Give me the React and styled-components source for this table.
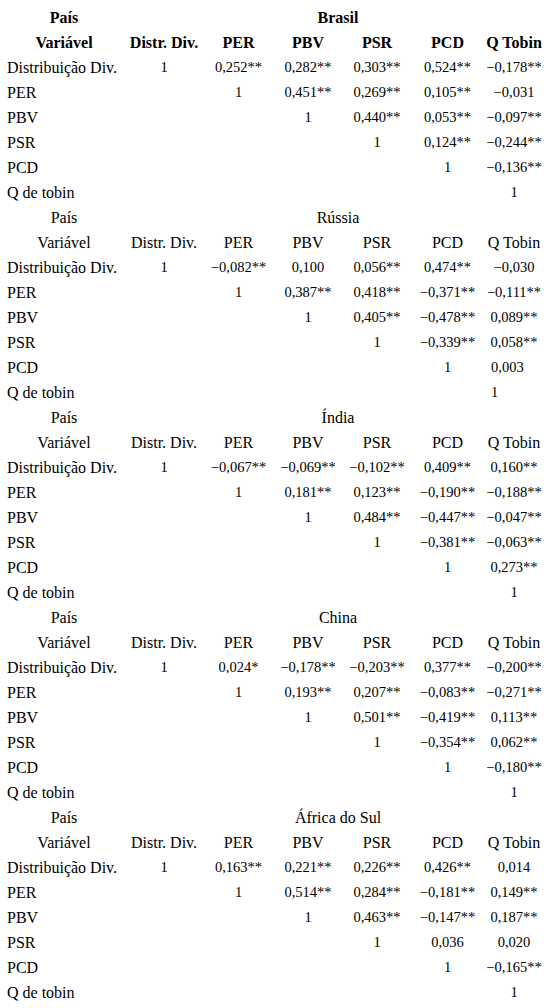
import React from "react";
import styled, { createGlobalStyle } from "styled-components";

const GlobalStyle = createGlobalStyle`
    html, body {
        margin: 0;
        padding: 0;
        background: #ffffff;
    }
    body {
        font-family: "Liberation Serif", "Times New Roman", serif;
        color: #000000;
    }
`;

const Page = styled.div`
    width: 558px;
    padding-top: 5px;
`;

const Section = styled.div`
    display: grid;
    grid-template-columns: 128px 72px 77px 62px 76px 65px 68px;
    grid-auto-rows: 25px;
    font-size: 16px;
    line-height: 25px;
`;

const Cell = styled.div`
    white-space: nowrap;
    text-align: center;
    font-weight: ${(p) => (p.$bold ? "bold" : "normal")};
`;

const ValueCell = styled.div`
    white-space: nowrap;
    font-size: 14.5px;
    text-align: ${(p) => (p.$left ? "left" : "center")};
    padding-left: ${(p) => (p.$left ? "11px" : "0")};
`;

const CountryCell = styled(Cell)`
    grid-column: 2 / span 6;
`;

const LabelCell = styled.div`
    white-space: nowrap;
    padding-left: 7px;
`;

const columns = ["Distr. Div.", "PER", "PBV", "PSR", "PCD", "Q Tobin"];
const labels = ["Distribuição Div.", "PER", "PBV", "PSR", "PCD", "Q de tobin"];

// valores acima da diagonal, linha por linha (a diagonal é sempre 1)
const countries = [
    {
        name: "Brasil",
        bold: true,
        rows: [
            ["0,252**", "0,282**", "0,303**", "0,524**", "−0,178**"],
            ["0,451**", "0,269**", "0,105**", "−0,031"],
            ["0,440**", "0,053**", "−0,097**"],
            ["0,124**", "−0,244**"],
            ["−0,136**"],
            [],
        ],
    },
    {
        name: "Rússia",
        rows: [
            ["−0,082**", "0,100", "0,056**", "0,474**", "−0,030"],
            ["0,387**", "0,418**", "−0,371**", "−0,111**"],
            ["0,405**", "−0,478**", "0,089**"],
            ["−0,339**", "0,058**"],
            ["0,003"],
            [],
        ],
        leftLast: true,
    },
    {
        name: "Índia",
        rows: [
            ["−0,067**", "−0,069**", "−0,102**", "0,409**", "0,160**"],
            ["0,181**", "0,123**", "−0,190**", "−0,188**"],
            ["0,484**", "−0,447**", "−0,047**"],
            ["−0,381**", "−0,063**"],
            ["0,273**"],
            [],
        ],
    },
    {
        name: "China",
        rows: [
            ["0,024*", "−0,178**", "−0,203**", "0,377**", "−0,200**"],
            ["0,193**", "0,207**", "−0,083**", "−0,271**"],
            ["0,501**", "−0,419**", "0,113**"],
            ["−0,354**", "0,062**"],
            ["−0,180**"],
            [],
        ],
    },
    {
        name: "África do Sul",
        rows: [
            ["0,163**", "0,221**", "0,226**", "0,426**", "0,014"],
            ["0,514**", "0,284**", "−0,181**", "0,149**"],
            ["0,463**", "−0,147**", "0,187**"],
            ["0,036", "0,020"],
            ["−0,165**"],
            [],
        ],
    },
];

function CountryTable({ country }) {
    const { name, bold, rows, leftLast } = country;
    return (
        <Section>
            <Cell $bold={bold}>País</Cell>
            <CountryCell $bold={bold}>{name}</CountryCell>

            <Cell $bold={bold}>Variável</Cell>
            {columns.map((c) => (
                <Cell key={c} $bold={bold}>
                    {c}
                </Cell>
            ))}

            {rows.map((values, i) => {
                const cells = [];
                for (let j = 0; j < 6; j++) {
                    let text = "";
                    if (j === i) text = "1";
                    if (j > i) text = values[j - i - 1];
                    const left = leftLast && j === 5 && i >= 4;
                    cells.push(
                        <ValueCell key={j} $left={left}>
                            {text}
                        </ValueCell>
                    );
                }
                return (
                    <React.Fragment key={labels[i]}>
                        <LabelCell>{labels[i]}</LabelCell>
                        {cells}
                    </React.Fragment>
                );
            })}
        </Section>
    );
}

export default function App() {
    return (
        <Page>
            <GlobalStyle />
            {countries.map((c) => (
                <CountryTable key={c.name} country={c} />
            ))}
        </Page>
    );
}
